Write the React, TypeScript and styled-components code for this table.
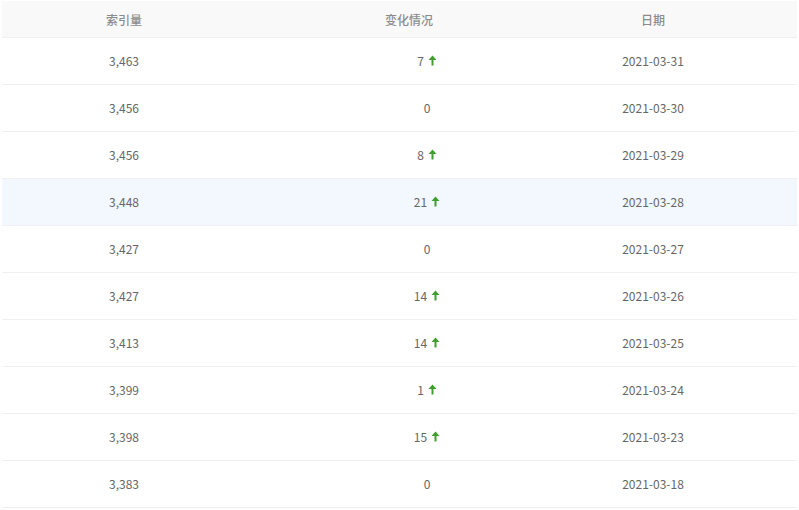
import React from "react";
import styled, { createGlobalStyle } from "styled-components";

const Global = createGlobalStyle`
  html, body { margin: 0; padding: 0; background: #fff; }
  body { font-family: "Noto Sans CJK SC", "Noto Sans", sans-serif; }
`;

const Table = styled.div`
  padding: 1px 2px 0 2px;
  width: 795px;
`;

const HeadRow = styled.div`
  display: grid;
  grid-template-columns: 244px 263px 288px;
  height: 36px;
  background: #f9f9f9;
  border-bottom: 1px solid #f0f0f0;
  align-items: center;
`;

const Row = styled.div<{ $hl?: boolean }>`
  display: grid;
  grid-template-columns: 244px 263px 288px;
  height: 46px;
  align-items: center;
  background: ${(p) => (p.$hl ? "#f3f7fe" : "#fff")};
  border-bottom: 1px solid #f0f0f0;
`;

const Th = styled.div<{ $pl?: number }>`
  text-align: center;
  padding-left: ${(p) => p.$pl ?? 0}px;
  font-size: 12px;
  color: #8c8c8c;
  font-weight: 500;
`;

const Td = styled.div<{ $pl?: number }>`
  padding-left: ${(p) => p.$pl ?? 0}px;
  padding-bottom: 2px;
  font-size: 12px;
  color: #666;
  display: flex;
  justify-content: center;
  align-items: center;
`;

const Change = styled.span`
  display: inline-flex;
  align-items: center;
  gap: 4px;
`;

const Arrow = () => (
  <svg width="9" height="11" viewBox="0 0 9 11">
    <path d="M4.5 0.5 L8.5 5 L5.5 5 L5.5 10.5 L3.5 10.5 L3.5 5 L0.5 5 Z" fill="#3f9e2e" />
  </svg>
);

const data: [string, number, string][] = [
  ["3,463", 7, "2021-03-31"],
  ["3,456", 0, "2021-03-30"],
  ["3,456", 8, "2021-03-29"],
  ["3,448", 21, "2021-03-28"],
  ["3,427", 0, "2021-03-27"],
  ["3,427", 14, "2021-03-26"],
  ["3,413", 14, "2021-03-25"],
  ["3,399", 1, "2021-03-24"],
  ["3,398", 15, "2021-03-23"],
  ["3,383", 0, "2021-03-18"],
];

export default function App() {
  return (
    <>
      <Global />
      <Table>
        <HeadRow>
          <Th>索引量</Th>
          <Th $pl={63}>变化情况</Th>
          <Th>日期</Th>
        </HeadRow>
        {data.map(([v, c, d], i) => (
          <Row key={i} $hl={i === 3}>
            <Td>{v}</Td>
            <Td $pl={99}>
              <Change>
                {c}
                {c > 0 && <Arrow />}
              </Change>
            </Td>
            <Td>{d}</Td>
          </Row>
        ))}
      </Table>
    </>
  );
}
